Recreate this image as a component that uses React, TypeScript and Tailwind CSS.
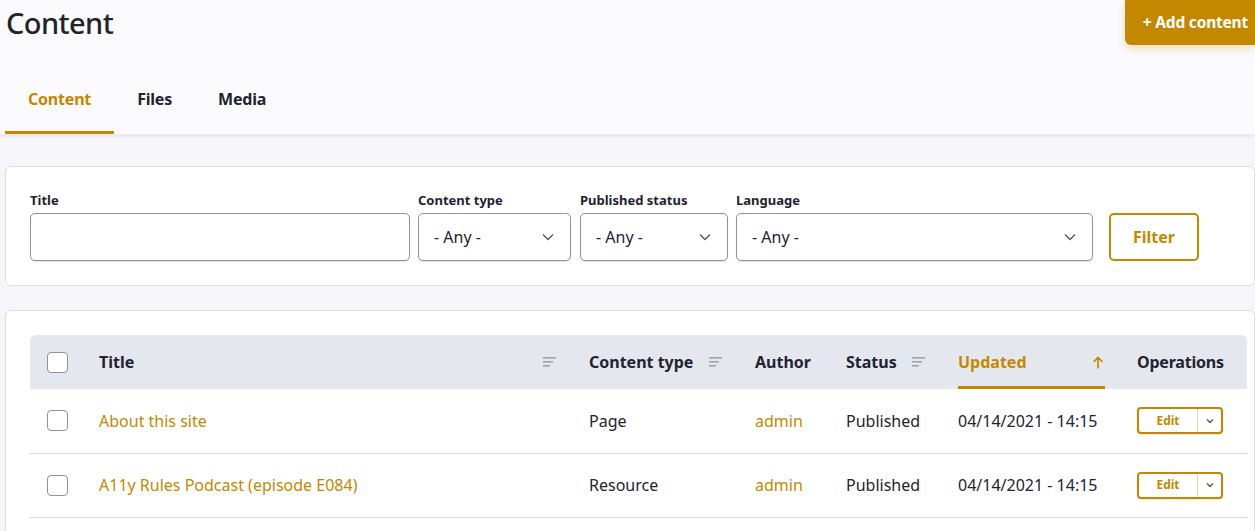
import React from 'react';

const ORANGE = 'text-[#c48800]';

function SortIcon() {
  return (
    <svg width="13" height="10" viewBox="0 0 13 10" className="shrink-0">
      <rect x="0" y="0" width="13" height="1.6" fill="#a0a3ad" />
      <rect x="0" y="4" width="10" height="1.6" fill="#a0a3ad" />
      <rect x="0" y="8" width="7" height="1.6" fill="#a0a3ad" />
    </svg>
  );
}

function Chevron({ size = 14 }: { size?: number }) {
  return (
    <svg width={size} height={size} viewBox="0 0 14 14" fill="none" className="shrink-0">
      <path d="M2 4.5l5 5 5-5" stroke="#545560" strokeWidth="1.4" />
    </svg>
  );
}

function Select({ width }: { width: string }) {
  return (
    <div className={`${width} h-[48px] flex items-center justify-between pl-[15px] pr-[15px] bg-white border border-[#8e929c] rounded-[5px] shadow-[0_1px_1px_rgba(0,0,0,0.12)] text-[16px] text-[#222330]`}>
      <span>- Any -</span>
      <Chevron />
    </div>
  );
}

function Checkbox() {
  return <div className="w-[21px] h-[21px] rounded-[4px] border border-[#8e929c] bg-white" />;
}

function DropButton() {
  return (
    <div className="flex h-[27px] w-[86px] border-2 border-[#c48800] rounded-[4px] bg-white shadow-[0_1px_2px_rgba(0,0,0,0.1)]">
      <div className={`flex-1 flex items-center justify-center text-[12px] font-bold ${ORANGE}`}>Edit</div>
      <div className="w-[24px] border-l border-[#e8d3a3] flex items-center justify-center">
        <svg width="10" height="10" viewBox="0 0 10 10" fill="none">
          <path d="M2 3.5l3 3 3-3" stroke="#545560" strokeWidth="1.5" />
        </svg>
      </div>
    </div>
  );
}

const ROWS = [
  { title: 'About this site', type: 'Page' },
  { title: 'A11y Rules Podcast (episode E084)', type: 'Resource' },
];

export default function App() {
  return (
    <div className="w-[1255px] h-[531px] overflow-hidden bg-[#f6f6fa] text-[#222330]" style={{ fontFamily: '"Noto Sans", "Open Sans", sans-serif' }}>
      {/* header */}
      <div className="bg-[#fbfbfd] shadow-[0_2px_3px_rgba(0,0,0,0.06)] border-b border-[#eeeef3]">
        <div className="flex justify-between items-start h-[64px]">
          <h1 className="pl-[6px] pt-[3px] text-[29px] leading-[40px] font-medium tracking-[-0.6px] text-[#232429]">Content</h1>
          <button className="h-[45px] pl-[18px] pr-[7px] bg-[#c48800] text-white text-[15.5px] font-bold tracking-[-0.2px] rounded-bl-[6px] shadow-[0_4px_10px_rgba(196,136,0,0.25)]">
            + Add content
          </button>
        </div>
        <div className="flex pl-[5px] h-[70px] items-end">
          <div className={`px-[23px] h-full flex items-center pt-[3px] border-b-[3px] border-[#c48800] font-bold text-[16px] tracking-[-0.2px] ${ORANGE}`}>Content</div>
          <div className="px-[23px] h-full flex items-center pt-[3px] border-b-[3px] border-transparent font-bold text-[16px] tracking-[-0.2px]">Files</div>
          <div className="px-[23px] h-full flex items-center pt-[3px] border-b-[3px] border-transparent font-bold text-[16px] tracking-[-0.2px]">Media</div>
        </div>
      </div>

      {/* filters */}
      <div className="ml-[5px] mt-[31px] bg-white border border-[#dcdde3] rounded-[6px] pl-[24px] pt-[24px] pb-[24px] flex items-end">
        <div className="flex flex-col gap-[4px] mr-[8px]">
          <label className="text-[13px] font-bold leading-[18px]">Title</label>
          <div className="w-[380px] h-[48px] bg-white border border-[#8e929c] rounded-[5px] shadow-[0_1px_1px_rgba(0,0,0,0.12)]" />
        </div>
        <div className="flex flex-col gap-[4px] mr-[9px]">
          <label className="text-[13px] font-bold leading-[18px]">Content type</label>
          <Select width="w-[153px]" />
        </div>
        <div className="flex flex-col gap-[4px] mr-[8px]">
          <label className="text-[13px] font-bold leading-[18px]">Published status</label>
          <Select width="w-[148px]" />
        </div>
        <div className="flex flex-col gap-[4px] mr-[16px]">
          <label className="text-[13px] font-bold leading-[18px]">Language</label>
          <Select width="w-[357px]" />
        </div>
        <button className={`w-[90px] h-[48px] border-2 border-[#c48800] rounded-[5px] bg-white text-[16px] font-bold ${ORANGE}`}>Filter</button>
      </div>

      {/* table */}
      <div className="ml-[5px] mt-[24px] bg-white border border-[#dcdde3] rounded-[6px] pl-[24px] pr-[7px] pt-[24px] h-[300px]">
        <table className="w-[1217px] border-collapse text-[16px]">
          <thead>
            <tr className="bg-[#e5e7ef] h-[54px] text-left">
              <th className="w-[69px] pl-[17px] rounded-tl-[6px]"><Checkbox /></th>
              <th className="w-[490px] pr-[33px] font-bold">
                <div className="flex items-center justify-between"><span>Title</span><SortIcon /></div>
              </th>
              <th className="w-[166px] pr-[33px] font-bold">
                <div className="flex items-center justify-between"><span>Content type</span><SortIcon /></div>
              </th>
              <th className="w-[91px] font-bold">Author</th>
              <th className="w-[112px] pr-[33px] font-bold">
                <div className="flex items-center justify-between"><span>Status</span><SortIcon /></div>
              </th>
              <th className="w-[179px] pr-[32px] font-bold">
                <div className={`flex items-center justify-between h-[54px] border-b-[3px] border-[#c48800] pt-[3px] ${ORANGE}`}>
                  <span>Updated</span>
                  <svg width="12" height="13" viewBox="0 0 12 13" fill="none" className="mr-[1px]">
                    <path d="M6 12.5V1.5M1.5 6l4.5-4.5L10.5 6" stroke="#c48800" strokeWidth="1.7" />
                  </svg>
                </div>
              </th>
              <th className="w-[110px] font-bold rounded-tr-[6px] tracking-[-0.2px]">Operations</th>
            </tr>
          </thead>
          <tbody>
            {ROWS.map((r) => (
              <tr key={r.title} className="h-[64px] border-b border-[#d8d9de]">
                <td className="pl-[17px]"><Checkbox /></td>
                <td className={ORANGE}>{r.title}</td>
                <td>{r.type}</td>
                <td className={ORANGE}>admin</td>
                <td>Published</td>
                <td>04/14/2021 - 14:15</td>
                <td><DropButton /></td>
              </tr>
            ))}
          </tbody>
        </table>
      </div>
    </div>
  );
}
